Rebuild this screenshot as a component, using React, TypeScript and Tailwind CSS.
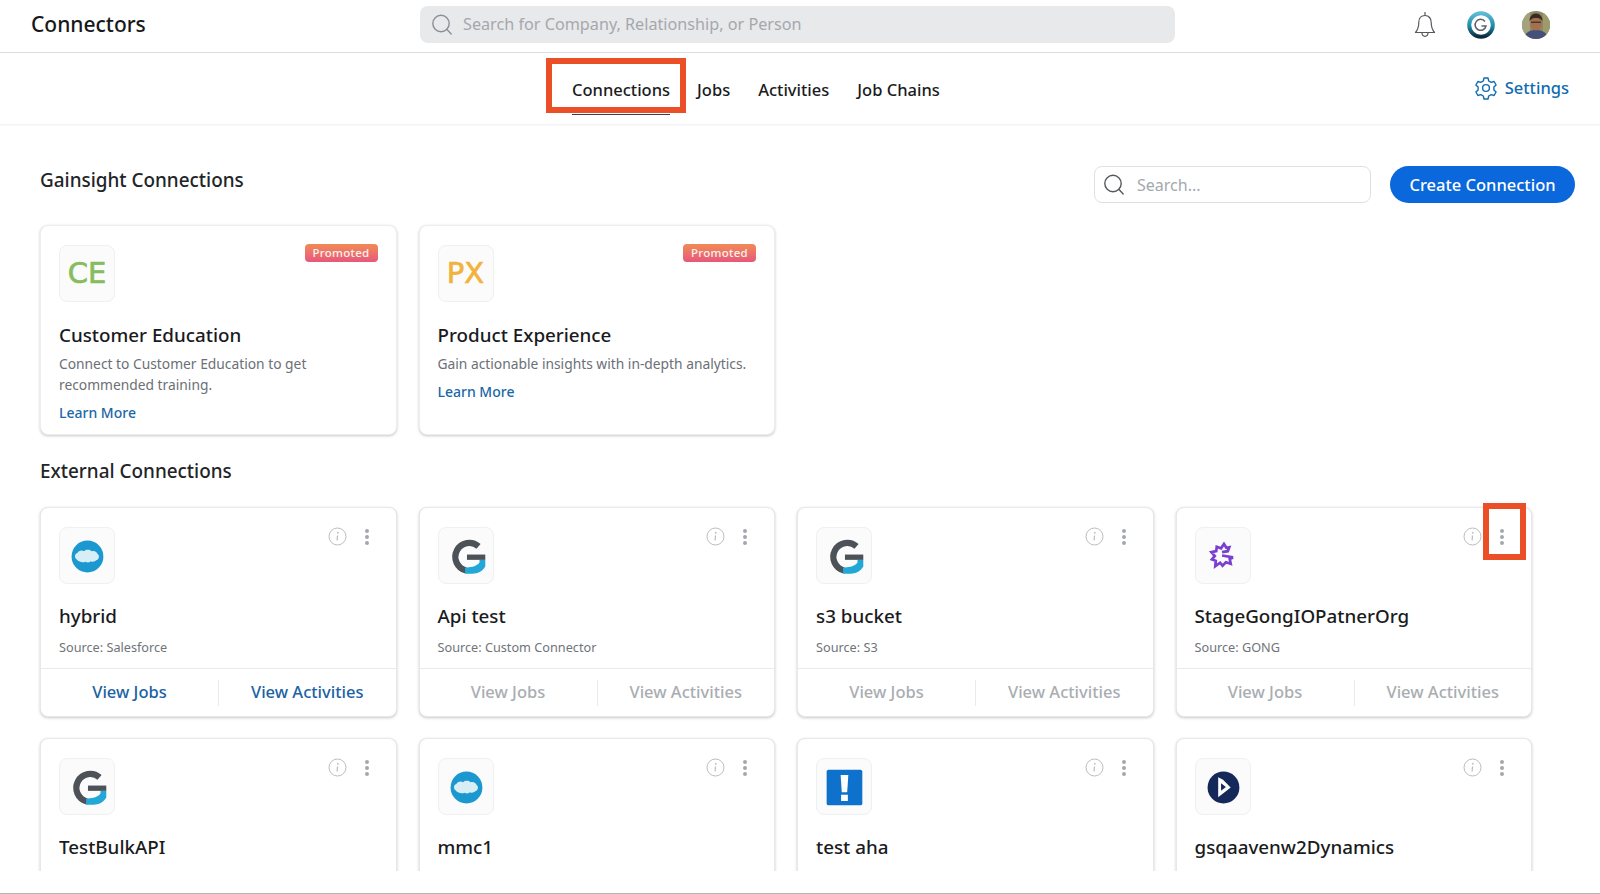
import React from "react";

const F = "font-['Noto_Sans',sans-serif]";

function SearchIcon({ color = "#8a8f96" }: { color?: string }) {
  return (
    <svg width="24" height="24" viewBox="0 0 24 24" fill="none" stroke={color} strokeWidth="1.4" strokeLinecap="round">
      <circle cx="11" cy="10.5" r="8.2" />
      <path d="M17 16.5l4.2 4.5" />
    </svg>
  );
}

function Bell() {
  return (
    <svg width="24" height="28" viewBox="0 0 24 28" fill="none" stroke="#55595f" strokeWidth="1.2" strokeLinejoin="round">
      <path d="M12 1v3.5" />
      <path d="M12 4.5c-4 0-6.2 3-6.2 7 0 4.500-.8 7-3.300 10h19c-2.500-3-3.300-5.500-3.300-10 0-4-2.200-7-6.200-7z" />
      <path d="M9 21.500c0 2.300 1.300 3.800 3 3.800s3-1.500 3-3.800" />
    </svg>
  );
}

function BrandBadge() {
  return (
    <svg width="28" height="28" viewBox="0 0 28 28" fill="none">
      <defs>
        <linearGradient id="ring" x1="0" y1="0" x2="0" y2="1">
          <stop offset="0" stopColor="#5dbcd4" />
          <stop offset="0.55" stopColor="#1f8ba8" />
          <stop offset="1" stopColor="#0b2a3a" />
        </linearGradient>
      </defs>
      <circle cx="14" cy="14" r="11.800" stroke="url(#ring)" strokeWidth="4" />
      <path d="M18 10.500A5.500 5.500 0 1 0 19 15H14.500" stroke="#5b6168" strokeWidth="1.500" />
    </svg>
  );
}

function Avatar() {
  return (
    <svg width="28" height="28" viewBox="0 0 28 28">
      <defs>
        <clipPath id="av"><circle cx="14" cy="14" r="14" /></clipPath>
      </defs>
      <g clipPath="url(#av)">
        <rect width="28" height="28" fill="#8b8a66" />
        <rect x="0" y="0" width="8" height="28" fill="#a3a27c" />
        <rect x="21" y="0" width="7" height="28" fill="#9d9a6c" />
        <path d="M2 28c1-7 6-9 12-9s11 2 12 9z" fill="#46517a" />
        <ellipse cx="14" cy="12" rx="6" ry="7.500" fill="#a5704f" />
        <path d="M7.500 10c0-5 3-7.500 6.500-7.500s6.500 2.500 6.500 7.500c-2-2.500-4-3-6.500-3s-4.500.5-6.500 3z" fill="#3b2a20" />
        <rect x="9" y="10.500" width="10" height="1.500" fill="#4c382c" />
      </g>
    </svg>
  );
}

function Gear() {
  return (
    <svg width="24" height="24" viewBox="0 0 24 24" fill="none" stroke="#0f6cb0" strokeWidth="1.400" strokeLinejoin="round">
      <path d="M10 2h4l.7 3 2.500 1.400 2.900-.9 2 3.500-2.200 2.100v2.800l2.200 2.100-2 3.500-2.900-.9-2.500 1.400-.7 3h-4l-.7-3-2.500-1.400-2.900.9-2-3.500 2.200-2.100v-2.800L1.900 9l2-3.500 2.900.9L9.300 5z" />
      <circle cx="12" cy="12" r="3.400" />
    </svg>
  );
}

function InfoIcon() {
  return (
    <svg width="19" height="19" viewBox="0 0 19 19" fill="none" stroke="#b9bcc0" strokeWidth="1">
      <circle cx="9.500" cy="9.500" r="8.500" />
      <path d="M9.500 8.500l-.4 5" strokeWidth="1.200" />
      <circle cx="9.800" cy="5.800" r=".5" fill="#b9bcc0" />
    </svg>
  );
}

function Dots() {
  return (
    <svg width="6" height="18" viewBox="0 0 6 18" fill="#a4a8ae">
      <circle cx="3" cy="3" r="2" />
      <circle cx="3" cy="9" r="2" />
      <circle cx="3" cy="15" r="2" />
    </svg>
  );
}

function GLogo() {
  return (
    <svg width="56" height="56" viewBox="0 0 56 56" fill="none">
      <path d="M41 18A14.500 14.500 0 1 0 28 43" stroke="#4c5258" strokeWidth="6.500" />
      <path d="M42 32h6v7c-3 5-8 7.500-13 7.500l-8-.2v-6.500c6 .5 12-1 15-5z" fill="#22a7d6" />
      <rect x="29" y="26.500" width="19" height="5.500" fill="#4c5258" />
    </svg>
  );
}

function SalesforceLogo() {
  return (
    <svg width="56" height="56" viewBox="0 0 56 56">
      <circle cx="28.500" cy="28.500" r="16.500" fill="#1b98cf" />
      <path d="M18 32c-3-1-3.500-6 0-7 1-3 5-3.500 7-2 2-2 6-2 7.500 0 3-1 6 .5 6.500 3 2.500 1.500 1.500 6-1.500 6.500-1 1.500-4 2-5.500 1-1.500 1.500-4 1.500-5.500.5-2.500 1.200-7 .5-9-2z" fill="#d8eef7" />
    </svg>
  );
}

function GongLogo() {
  return (
    <svg width="56" height="56" viewBox="0 0 56 56" fill="none">
      <path d="M38.500 29.500l-3.500 1.500 1 5-5-1.500-3.500 3.500-2.500-3-5 3.500.5-5.500-4-1.500 3-3.500-3.500-4 5-1 .5-4.500 4.500 1.500 3-4.500 2.500 4 3-.5-1.500 4-6 1" stroke="#7a3fd1" strokeWidth="2.800" strokeLinejoin="miter" />
      <path d="M27 27.500l11.500 2" stroke="#7a3fd1" strokeWidth="2.800" />
    </svg>
  );
}

function AhaLogo() {
  return (
    <svg width="56" height="56" viewBox="0 0 56 56">
      <rect x="10" y="10" width="37" height="37" rx="2" fill="#0e72cc" />
      <path d="M24.500 15.500h8l-1.200 18h-5.600z" fill="#fff" />
      <rect x="25" y="36" width="7" height="6.500" fill="#fff" />
    </svg>
  );
}

function DynamicsLogo() {
  return (
    <svg width="56" height="56" viewBox="0 0 56 56">
      <circle cx="28.500" cy="28.500" r="16.500" fill="#14295a" />
      <path d="M23 18l5 2.500 8 8-13 10z" fill="#fff" />
      <path d="M26 24v8l5-4z" fill="#14295a" />
    </svg>
  );
}

function TextLogo({ text, color }: { text: string; color: string }) {
  return <span className="font-['DejaVu_Sans',sans-serif] text-[29px] leading-none [-webkit-text-stroke:0.7px_currentColor]" style={{ color }}>{text}</span>;
}

function IconBox({ children }: { children: React.ReactNode }) {
  return (
    <div className="flex h-[57px] w-[56px] items-center justify-center rounded-lg border border-[#eff0f2] bg-[#fbfbfc]">
      {children}
    </div>
  );
}

function Promoted({ title, desc, logo, color }: { title: string; desc: React.ReactNode; logo: string; color: string }) {
  return (
    <div className="relative h-[210px] rounded-lg border border-[#eceded] bg-white px-[18px] pt-[19px] shadow-[0_1px_3px_rgba(0,0,0,0.22)]">
      <span className="absolute right-[18px] top-[18px] flex h-[18px] w-[73px] items-center justify-center rounded bg-gradient-to-b from-[#f08a52] to-[#e8567c] text-[11.500px] font-medium tracking-[0.3px] text-[#fdf1ec]">
        Promoted
      </span>
      <IconBox><TextLogo text={logo} color={color} /></IconBox>
      <div className="mt-[19px] text-[18.800px] font-medium leading-[28px] text-[#1a1b1d]">{title}</div>
      <div className="mt-[4px] text-[13.800px] leading-[21px] text-[#6b7076]">{desc}</div>
      <div className="mt-[7px] text-[14px] font-medium leading-[21px] text-[#1a68a8]">Learn More</div>
    </div>
  );
}

type Conn = { name: string; source?: string; logo: React.ReactNode; active?: boolean };

function ConnCard({ c }: { c: Conn }) {
  const linkColor = c.active ? "text-[#1a62a3]" : "text-[#a9adb2]";
  return (
    <div className="relative flex h-[210px] flex-col rounded-lg border border-[#e7e8ea] bg-white shadow-[0_1px_3px_rgba(0,0,0,0.22)]">
      <div className="absolute right-[26px] top-[19px] flex items-center gap-[17px]">
        <InfoIcon />
        <Dots />
      </div>
      <div className="h-[160px] px-[18px] pt-[19px]">
        <IconBox>{c.logo}</IconBox>
        <div className="mt-[18px] text-[18.800px] font-medium leading-[28px] text-[#1a1b1d]">{c.name}</div>
        {c.source && <div className="mt-[7px] text-[12.700px] leading-[20px] text-[#6f7479]">{c.source}</div>}
      </div>
      {c.source && (
        <div className="flex flex-1 items-center border-t border-[#e9eaec]">
          <div className={`flex h-[26px] w-[178px] items-center justify-center border-r border-[#e9eaec] text-[16.500px] font-medium ${linkColor}`}>View Jobs</div>
          <div className={`flex h-[26px] flex-1 items-center justify-center text-[16.500px] font-medium ${linkColor}`}>View Activities</div>
        </div>
      )}
    </div>
  );
}

const conns: Conn[] = [
  { name: "hybrid", source: "Source: Salesforce", logo: <SalesforceLogo />, active: true },
  { name: "Api test", source: "Source: Custom Connector", logo: <GLogo /> },
  { name: "s3 bucket", source: "Source: S3", logo: <GLogo /> },
  { name: "StageGongIOPatnerOrg", source: "Source: GONG", logo: <GongLogo /> },
  { name: "TestBulkAPI", logo: <GLogo /> },
  { name: "mmc1", logo: <SalesforceLogo /> },
  { name: "test aha", logo: <AhaLogo /> },
  { name: "gsqaavenw2Dynamics", logo: <DynamicsLogo /> },
];

export default function App() {
  return (
    <div className={`relative h-[894px] w-[1600px] overflow-hidden bg-white ${F}`}>
      <header className="flex h-[53px] items-center border-b border-[#dcdddf] pl-[31px]">
        <h1 className="mb-[3px] w-[389px] text-[21px] font-medium text-[#17181a]">Connectors</h1>
        <div className="mb-[3px] flex h-[37px] w-[755px] items-center gap-[9px] rounded-lg bg-[#e8e9eb] pl-[10px]">
          <SearchIcon />
          <span className="text-[16.200px] text-[#a4a8ae]">Search for Company, Relationship, or Person</span>
        </div>
        <div className="ml-[238px] mb-[2px]"><Bell /></div>
        <div className="ml-[30px] mb-[2px]"><BrandBadge /></div>
        <div className="ml-[27px] mb-[2px]"><Avatar /></div>
      </header>

      <nav className="relative flex h-[72px] items-center border-b border-[#f2f3f4] pl-[572px] text-[16.500px] font-medium text-[#1a1b1d] shadow-[0_1px_1px_rgba(0,0,0,0.02)]">
        <div className="relative mt-[3px]">
          Connections
          <span className="absolute -bottom-[13px] left-0 right-0 h-[1.500px] bg-[#3c3f44]" />
        </div>
        <div className="ml-[27px] mt-[3px]">Jobs</div>
        <div className="ml-[28px] mt-[3px]">Activities</div>
        <div className="ml-[28px] mt-[3px]">Job Chains</div>
        <div className="absolute right-[31px] top-[23px] flex items-center gap-[7px] text-[16.500px] font-medium text-[#0f6cb0]">
          <Gear />
          Settings
        </div>
      </nav>

      <main className="h-[746px] overflow-hidden pl-[40px]">
        <div className="flex h-[100px] items-start pr-[25px] pt-[41px]">
          <h2 className="flex-1 text-[18.900px] font-medium leading-[28px] text-[#222427]">Gainsight Connections</h2>
          <div className="flex h-[37px] w-[277px] items-center gap-[11px] rounded-lg border border-[#dfe0e2] pl-[7px]">
            <SearchIcon color="#55595f" />
            <span className="text-[16px] text-[#a4a8ae]">Search...</span>
          </div>
          <div className="ml-[19px] flex h-[37px] w-[185px] items-center justify-center rounded-full bg-[#0a67dc] pt-[1px] text-[16.500px] font-medium text-white">Create Connection</div>
        </div>
        <div className="grid grid-cols-[356.500px_356.500px] gap-x-[22px]">
          <Promoted
            title="Customer Education"
            logo="CE"
            color="#86bd5c"
            desc={<>Connect to Customer Education to get<br />recommended training.</>}
          />
          <Promoted
            title="Product Experience"
            logo="PX"
            color="#f2b33d"
            desc="Gain actionable insights with in-depth analytics."
          />
        </div>
        <h2 className="mt-[22px] text-[18.900px] font-medium leading-[28px] text-[#222427]">External Connections</h2>
        <div className="mt-[22px] grid grid-cols-[356.500px_356.500px_356.500px_356.500px] gap-x-[22px] gap-y-[21px]">
          {conns.map((c) => <ConnCard key={c.name} c={c} />)}
        </div>
      </main>

      <div className="h-[23px] border-b border-[#b4b5b7]" />

      <div className="absolute left-[546px] top-[58px] h-[55px] w-[140px] border-[6px] border-[#ea4f28]" />
      <div className="absolute left-[1483px] top-[503px] h-[57px] w-[43px] border-[6px] border-[#ea4f28]" />
    </div>
  );
}
